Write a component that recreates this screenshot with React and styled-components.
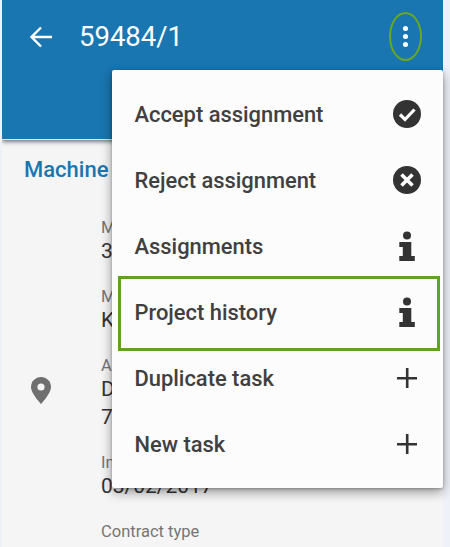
import React from "react";
import styled, { createGlobalStyle } from "styled-components";

const Global = createGlobalStyle`
  html, body { margin: 0; padding: 0; background: #fff; }
  body { font-family: Roboto, "Liberation Sans", sans-serif; }
  #root { width: 450px; height: 547px; overflow: hidden; }
`;

const Frame = styled.div`
  position: relative;
  width: 450px;
  height: 547px;
  overflow: hidden;
  background: #eef1f8;
  padding: 0 7px 0 2px;
  box-sizing: border-box;
`;

const Screen = styled.div`
  height: 100%;
  background: #f5f5f5;
  display: flex;
  flex-direction: column;
  overflow: hidden;
`;

const Header = styled.header`
  height: 139px;
  flex: none;
  background: #1976b1;
  box-shadow: 0 1px 0 #dfe8ef, 0 3px 4px rgba(0, 0, 0, 0.5);
  display: flex;
  align-items: flex-start;
  padding: 21px 0 0 27px;
  box-sizing: border-box;
  color: #fff;
`;

const BackIcon = styled.svg`
  width: 24px;
  height: 24px;
  flex: none;
  margin-top: 4px;
`;

const Title = styled.h1`
  margin: 0 0 0 26px;
  font-size: 27.5px;
  line-height: 32px;
  font-weight: 400;
`;

const Content = styled.main`
  flex: 1;
  padding: 19px 0 0 22px;
`;

const SectionTitle = styled.h2`
  margin: 0;
  font-size: 22px;
  line-height: 24px;
  font-weight: 500;
  color: #1976b1;
  white-space: nowrap;
`;

const Details = styled.div`
  display: grid;
  grid-template-columns: 77px 1fr;
  margin-top: 35px;
`;

const PinCell = styled.div`
  display: flex;
  align-items: center;
  padding: 20px 0 0 7px;
`;

const Fields = styled.div`
  display: flex;
  flex-direction: column;
  gap: 23px;
  white-space: nowrap;
`;

const Field = styled.div`
  display: flex;
  flex-direction: column;
`;

const Label = styled.span`
  font-size: 16.5px;
  line-height: 22px;
  color: #757575;
`;

const Value = styled.span`
  font-size: 21px;
  line-height: 24px;
  color: #333;

  & + & {
    margin-top: 4px;
  }
`;

const Menu = styled.ul`
  position: absolute;
  left: 112px;
  top: 70px;
  width: 331px;
  height: 418px;
  margin: 0;
  padding: 11px 0;
  box-sizing: border-box;
  list-style: none;
  background: #fcfcfc;
  border-radius: 2px;
  box-shadow: 0 4px 12px rgba(0, 0, 0, 0.4), 0 1px 3px rgba(0, 0, 0, 0.25);
`;

const MenuItem = styled.li`
  height: 66px;
  display: flex;
  align-items: center;
  justify-content: space-between;
  padding: 0 21px 0 22.5px;
  font-size: 21.9px;
  font-weight: 500;
  color: #404040;
`;

const MenuIcon = styled.svg`
  width: 30px;
  height: 30px;
  flex: none;
  fill: #333;
`;

const HighlightBox = styled.div`
  position: absolute;
  left: 118px;
  top: 276px;
  width: 322px;
  height: 75px;
  box-sizing: border-box;
  border: 3px solid #5fa321;
`;

const DotsRing = styled.div`
  position: absolute;
  left: 389px;
  top: 12px;
  width: 33px;
  height: 49px;
  box-sizing: border-box;
  border: 2px solid #69a81f;
  border-radius: 50%;
  display: flex;
  flex-direction: column;
  align-items: center;
  justify-content: center;
  gap: 2.5px;
`;

const Dot = styled.span`
  width: 5.5px;
  height: 5.5px;
  border-radius: 50%;
  background: #fff;
`;

const CheckIcon = () => (
  <MenuIcon viewBox="0 0 30 30">
    <circle cx="15" cy="15" r="14" />
    <path d="M8 15.500l5 5 9.500-10" fill="none" stroke="#fcfcfc" strokeWidth="3.200" />
  </MenuIcon>
);

const CrossIcon = () => (
  <MenuIcon viewBox="0 0 30 30">
    <circle cx="15" cy="15" r="14" />
    <path d="M9.500 9.500l11 11M20.500 9.500l-11 11" fill="none" stroke="#fcfcfc" strokeWidth="3.600" />
  </MenuIcon>
);

const InfoIcon = () => (
  <MenuIcon viewBox="0 0 30 30">
    <circle cx="15" cy="4.500" r="4" />
    <path d="M7 11h12v14h3.500v5H7v-5h3.500v-9H7z" transform="translate(0.300 0)" />
  </MenuIcon>
);

const PlusIcon = () => (
  <MenuIcon viewBox="0 0 30 30">
    <path d="M13.900 5h2.600v8.900H25v2.600h-8.500V25h-2.600v-8.500H5v-2.600h8.900z" />
  </MenuIcon>
);

const items = [
  ["Accept assignment", CheckIcon],
  ["Reject assignment", CrossIcon],
  ["Assignments", InfoIcon],
  ["Project history", InfoIcon],
  ["Duplicate task", PlusIcon],
  ["New task", PlusIcon],
];

export default function App() {
  return (
    <Frame>
      <Global />
      <Screen>
        <Header>
          <BackIcon viewBox="0 0 24 24" fill="none" stroke="#fff" strokeWidth="2.400">
            <path d="M23 12H3M12 2.500L2.500 12l9.500 9.500" />
          </BackIcon>
          <Title>59484/1</Title>
        </Header>
        <Content>
          <SectionTitle>Machine data</SectionTitle>
          <Details>
            <PinCell>
              <svg width="20" height="27" viewBox="0 0 20 27">
                <path
                  d="M10 0C4.500 0 0 4.400 0 10c0 6.500 10 17 10 17s10-10.500 10-17C20 4.400 15.500 0 10 0z"
                  fill="#6f6f6f"
                />
                <circle cx="10" cy="10" r="3.600" fill="#f5f5f5" />
              </svg>
            </PinCell>
            <Fields>
              <Field>
                <Label>Machine no.</Label>
                <Value>3845</Value>
              </Field>
              <Field>
                <Label>Machine type</Label>
                <Value>K200</Value>
              </Field>
              <Field>
                <Label>Address</Label>
                <Value>Dorfstrasse 12</Value>
                <Value>7000 Chur</Value>
              </Field>
              <Field>
                <Label>Installation date</Label>
                <Value>03/02/2017</Value>
              </Field>
              <Field>
                <Label>Contract type</Label>
              </Field>
            </Fields>
          </Details>
        </Content>
      </Screen>
      <DotsRing>
        <Dot />
        <Dot />
        <Dot />
      </DotsRing>
      <Menu>
        {items.map(([label, Icon]) => (
          <MenuItem key={label}>
            {label}
            <Icon />
          </MenuItem>
        ))}
      </Menu>
      <HighlightBox />
    </Frame>
  );
}
